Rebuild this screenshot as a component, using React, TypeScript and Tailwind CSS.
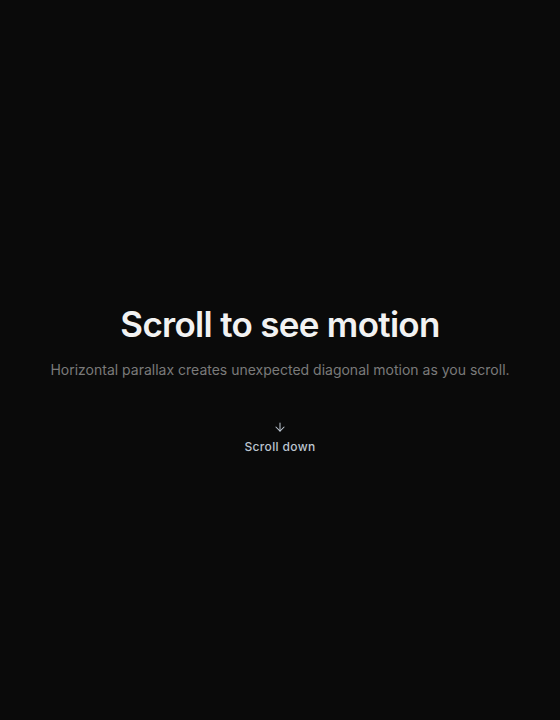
import { ArrowDown } from "lucide-react";

export default function App() {
  return (
    <div className="min-h-[720px] w-full bg-[#0a0a0a] font-['Inter',sans-serif]">
      <section className="flex h-[720px] flex-col items-center pt-[302px] text-center">
        <h1 className="text-[35px] font-semibold leading-[44px] tracking-[-0.02em] text-[#f2f2f2]">
          Scroll to see motion
        </h1>
        <p className="mt-[14px] text-[14px] leading-5 text-[#7a7a7a]">
          Horizontal parallax creates unexpected diagonal motion as you scroll.
        </p>
        <div className="mt-[40px] flex flex-col items-center gap-[5px] text-[#bcc5d0]">
          <ArrowDown className="size-[14px]" strokeWidth={1.75} />
          <span className="text-[12px] font-medium leading-4 tracking-[0.03em]">Scroll down</span>
        </div>
      </section>
    </div>
  );
}
